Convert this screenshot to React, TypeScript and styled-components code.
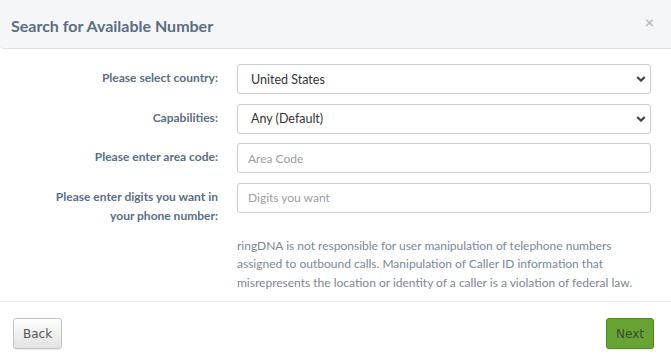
import styled, { createGlobalStyle } from "styled-components";

const GlobalStyle = createGlobalStyle`
  html, body {
    margin: 0;
    padding: 0;
    background: #ffffff;
  }

  body {
    font-family: Lato, "Noto Sans", sans-serif;
  }
`;

const Modal = styled.div`
  width: 671px;
  height: 363px;
  background: #ffffff;
  display: flex;
  flex-direction: column;
  overflow: hidden;
`;

const Header = styled.div`
  height: 48px;
  background: #f5f6f8;
  border-bottom: 1px solid #dfe1e4;
  border-bottom-left-radius: 4px;
  display: flex;
  align-items: center;
  justify-content: space-between;
  padding: 0 17px 0 11px;
  box-sizing: content-box;
`;

const Title = styled.h4`
  margin: 0;
  font-size: 16px;
  font-weight: 700;
  color: #5b6d82;
  padding-top: 2px;
`;

const Close = styled.span`
  font-size: 16px;
  font-weight: 700;
  color: #b9bcc0;
  line-height: 1;
  margin-top: -4px;
`;

const Body = styled.div`
  padding: 15px 20px 9px 0;
  border-bottom: 1px solid #e5e5e5;
`;

const Form = styled.div`
  display: grid;
  grid-template-columns: 218px 1fr;
  column-gap: 19px;
  row-gap: 9.5px;
  align-items: start;
`;

const Label = styled.label`
  text-align: right;
  font-size: 12px;
  font-weight: 700;
  line-height: 19px;
  padding-top: 4px;
  color: #5b6d82;
`;

const SelectWrap = styled.div`
  position: relative;
  height: 30px;
`;

const Select = styled.select`
  appearance: none;
  width: 100%;
  height: 30px;
  border: 1px solid #c9cbcf;
  border-radius: 3px;
  background: #ffffff;
  padding: 0 30px 0 13px;
  font-family: inherit;
  font-size: 12.5px;
  color: #333333;
`;

const Chevron = styled.svg`
  position: absolute;
  right: 5px;
  top: 12px;
  pointer-events: none;
`;

const Input = styled.input`
  width: 100%;
  height: 30px;
  box-sizing: border-box;
  border: 1px solid #c9cbcf;
  border-radius: 3px;
  padding: 0 10px;
  font-family: inherit;
  font-size: 12px;
  color: #333333;

  &::placeholder {
    color: #9a9ea4;
  }
`;

const Disclaimer = styled.p`
  margin: 12px 0 0 237px;
  font-size: 12px;
  line-height: 18.5px;
  color: #7b8696;
`;

const Footer = styled.div`
  flex: 1;
  display: flex;
  justify-content: space-between;
  align-items: flex-start;
  padding: 16px 17px 0 13px;
`;

const Button = styled.button<{ primary?: boolean }>`
  height: 31px;
  padding: 0 9px;
  font-family: "DejaVu Sans", sans-serif;
  font-size: 12px;
  border-radius: 3px;
  cursor: pointer;
  border: 1px solid ${(p) => (p.primary ? "#4e8a23" : "#c2c2c2")};
  color: ${(p) => (p.primary ? "#3b4a30" : "#555555")};
  background: ${(p) =>
    p.primary ? "#68a434" : "linear-gradient(to bottom, #ffffff, #e2e2e2)"};
  box-shadow: 0 1px 1px rgba(0, 0, 0, 0.08);
`;

function ChevronIcon() {
  return (
    <Chevron width="10" height="6" viewBox="0 0 10 6">
      <path d="M1.2 1 L5 4.6 L8.8 1" stroke="#444" strokeWidth="2.2" fill="none" />
    </Chevron>
  );
}

export default function App() {
  return (
    <>
      <GlobalStyle />
      <Modal>
        <Header>
          <Title>Search for Available Number</Title>
          <Close>×</Close>
        </Header>
        <Body>
          <Form>
            <Label>Please select country:</Label>
            <SelectWrap>
              <Select defaultValue="US">
                <option value="US">United States</option>
              </Select>
              <ChevronIcon />
            </SelectWrap>

            <Label>Capabilities:</Label>
            <SelectWrap>
              <Select defaultValue="any">
                <option value="any">Any (Default)</option>
              </Select>
              <ChevronIcon />
            </SelectWrap>

            <Label>Please enter area code:</Label>
            <Input placeholder="Area Code" />

            <Label>
              Please enter digits you want in
              <br />
              your phone number:
            </Label>
            <Input placeholder="Digits you want" />
          </Form>
          <Disclaimer>
            ringDNA is not responsible for user manipulation of telephone
            numbers assigned to outbound calls. Manipulation of Caller ID
            information that misrepresents the location or identity of a caller
            is a violation of federal law.
          </Disclaimer>
        </Body>
        <Footer>
          <Button>Back</Button>
          <Button primary>Next</Button>
        </Footer>
      </Modal>
    </>
  );
}
